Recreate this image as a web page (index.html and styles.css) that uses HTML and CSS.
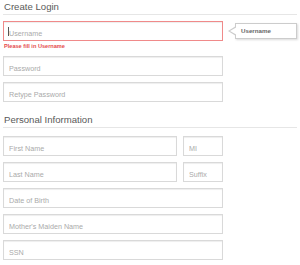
FILE: index.html
```html
<!DOCTYPE html>
<html lang="en">
<head>
    <meta charset="UTF-8">
    <meta name="viewport" content="width=device-width, initial-scale=1.0">
    <title>Create Login</title>
    <link rel="stylesheet" href="styles.css">
</head>
<body>
    <form class="signup">
        <h2 class="section-title">Create Login</h2>
        <div class="field-row">
            <div class="field field-error">
                <span class="caret"></span>
                <input type="text" placeholder="Username">
            </div>
            <div class="tooltip">Username</div>
        </div>
        <div class="error-text">Please fill in Username</div>
        <div class="field"><input type="password" placeholder="Password"></div>
        <div class="field"><input type="password" placeholder="Retype Password"></div>

        <h2 class="section-title section-gap">Personal Information</h2>
        <div class="field-pair">
            <div class="field field-wide"><input type="text" placeholder="First Name"></div>
            <div class="field field-small"><input type="text" placeholder="MI"></div>
        </div>
        <div class="field-pair">
            <div class="field field-wide"><input type="text" placeholder="Last Name"></div>
            <div class="field field-small"><input type="text" placeholder="Suffix"></div>
        </div>
        <div class="field"><input type="text" placeholder="Date of Birth"></div>
        <div class="field"><input type="text" placeholder="Mother's Maiden Name"></div>
        <div class="field"><input type="text" placeholder="SSN"></div>
    </form>
</body>
</html>
```

FILE: styles.css
```css
body {
    margin: 0;
    padding: 0 3px;
    font-family: "Liberation Sans", Arial, sans-serif;
    background-color: #fff;
}
.signup {
    display: flex;
    flex-direction: column;
    gap: 6px;
}
.section-title {
    margin: 0;
    padding: 1px 1px 2px 1px;
    font-size: 9.6px;
    font-weight: normal;
    line-height: 11px;
    color: #5a5a5a;
    border-bottom: 1px solid #e6e6e6;
}
.section-gap {
    margin-top: 5px;
    margin-bottom: 2px;
}
.field-row {
    display: flex;
    align-items: center;
}
.field {
    position: relative;
    width: 220px;
    height: 20px;
    box-sizing: border-box;
    border: 1px solid #d9d9d9;
    box-shadow: inset 0 1px 1px #eee;
}
.field input {
    width: 100%;
    height: 100%;
    box-sizing: border-box;
    border: none;
    outline: none;
    background: transparent;
    padding: 0 5px;
    font-family: inherit;
    font-size: 7.2px;
    color: #555;
}
.field input::placeholder {
    color: #aaa;
}
.field-error {
    border-color: #f08a8a;
}
.caret {
    position: absolute;
    left: 4px;
    top: 5px;
    width: 1px;
    height: 9px;
    background-color: #555;
}
.tooltip {
    position: relative;
    margin-left: 12px;
    width: 62px;
    height: 16px;
    box-sizing: border-box;
    border: 1px solid #ccc;
    box-shadow: 1px 1px 2px rgba(0, 0, 0, 0.15);
    background-color: #fff;
    padding-left: 5px;
    font-size: 6.2px;
    font-weight: bold;
    line-height: 14px;
    color: #666;
}
.tooltip::before,
.tooltip::after {
    content: "";
    position: absolute;
    top: 50%;
    border-style: solid;
    transform: translateY(-50%);
}
.tooltip::before {
    left: -8px;
    border-width: 5px 8px 5px 0;
    border-color: transparent #ccc transparent transparent;
}
.tooltip::after {
    left: -6px;
    border-width: 4px 7px 4px 0;
    border-color: transparent #fff transparent transparent;
}
.error-text {
    margin: -5px 0 0 1px;
    font-size: 5.6px;
    font-weight: bold;
    line-height: 8px;
    color: #e54b4b;
}
.field-pair {
    display: flex;
    gap: 6px;
}
.field-wide {
    width: 174px;
}
.field-small {
    width: 40px;
}
```
